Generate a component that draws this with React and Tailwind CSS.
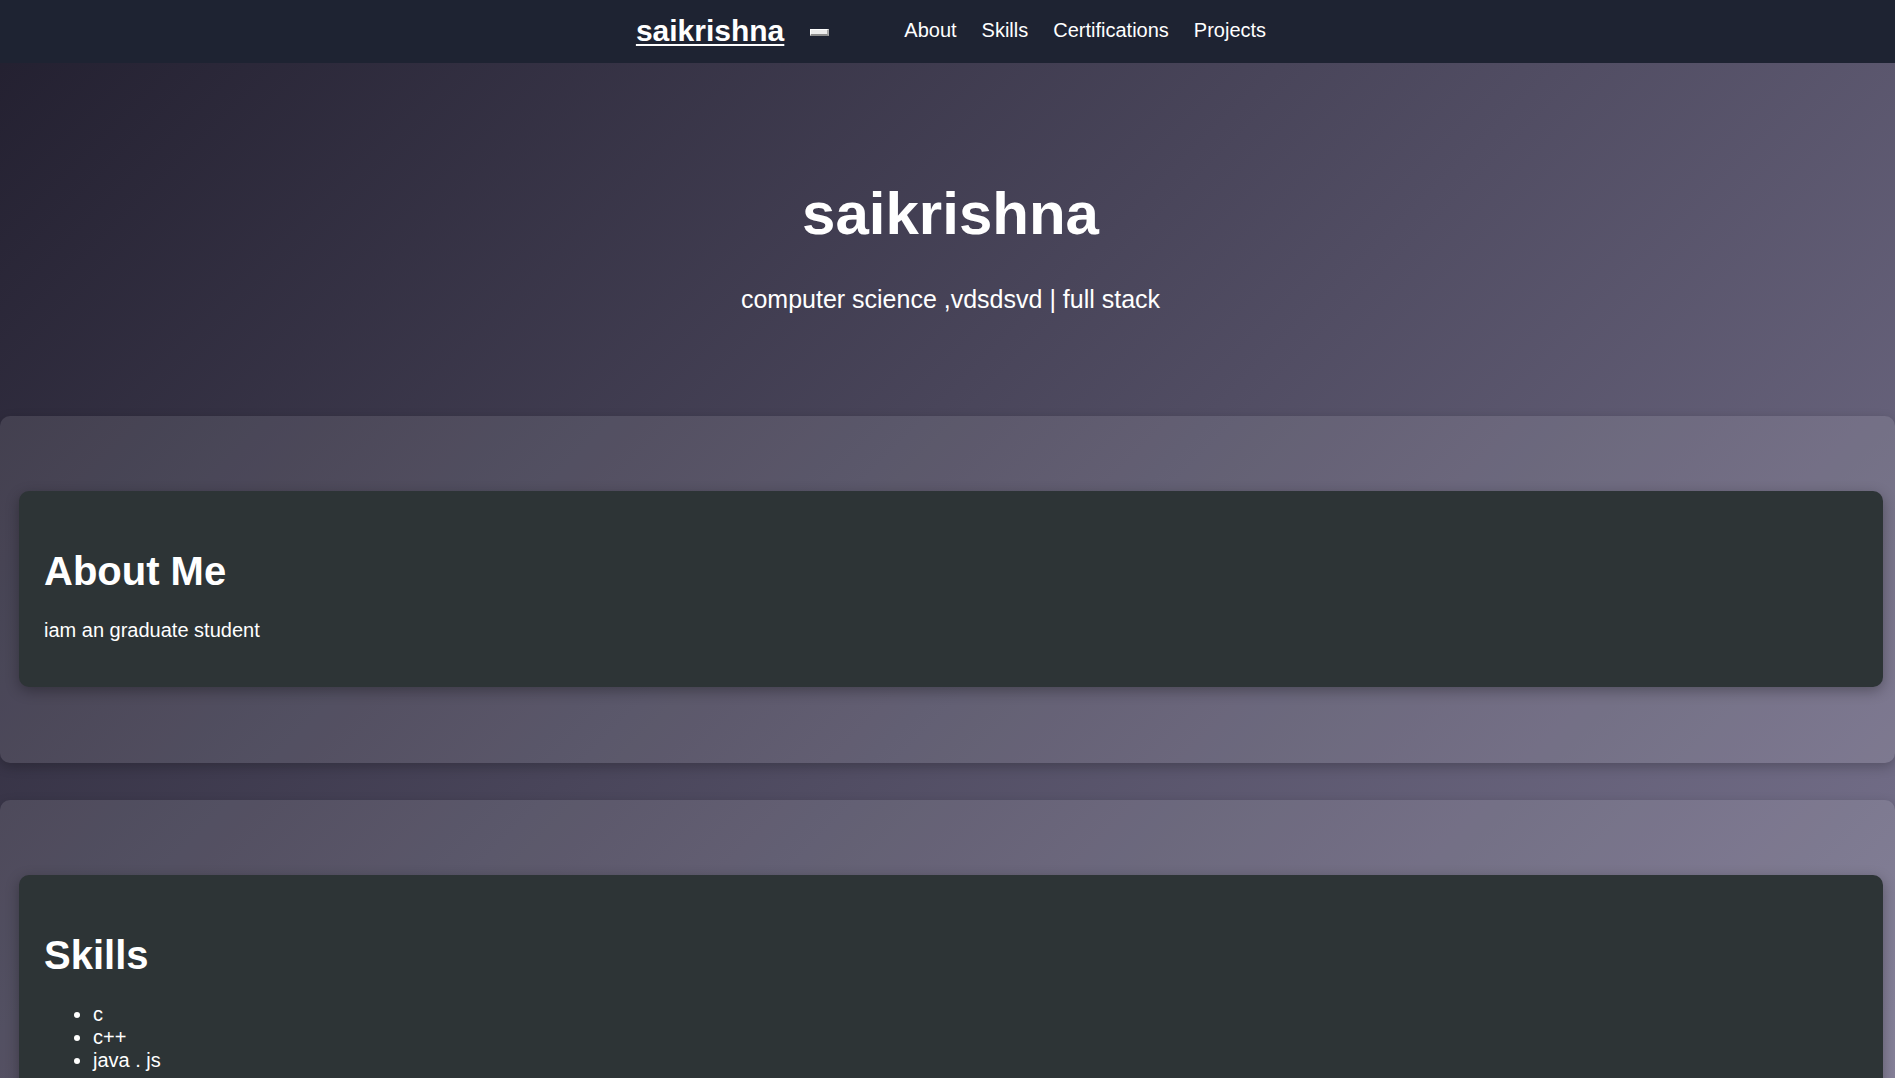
export default function App() {
  const links = ["About", "Skills", "Certifications", "Projects"];
  return (
    <div className="h-[1078px] overflow-hidden font-['Liberation_Sans',Arial,sans-serif] text-white bg-[linear-gradient(135deg,#221f2f,#78738e)]">
      <nav className="h-[63px] bg-[#1e2332] flex items-center justify-center pb-[2px] pl-[7px]">
        <a href="#" className="text-[30px] leading-[34px] font-bold underline decoration-2 underline-offset-[3px] text-white">
          saikrishna
        </a>
        <div className="ml-[26px] mt-1 w-[19px] h-[7px] bg-[#ececec] border-t border-l border-white border-b-2 border-r-2 border-b-[#8c8c8c] border-r-[#a8a8a8]" />
        <ul className="ml-[75px] flex gap-[25px] text-[20px] leading-[23px]">
          {links.map((l) => (
            <li key={l}>
              <a href="#" className="text-white">{l}</a>
            </li>
          ))}
        </ul>
      </nav>

      <header className="pt-[117px] pb-[102px] pl-[6px] text-center">
        <h1 className="text-[60px] leading-[68px] font-bold">saikrishna</h1>
        <p className="mt-[37px] text-[25px] leading-[29px]">computer science ,vdsdsvd | full stack</p>
      </header>

      <main className="flex flex-col gap-[37px]">
        <section className="rounded-[10px] bg-white/10 shadow-[0_4px_12px_rgba(0,0,0,0.22)] pt-[75px] pb-[76px] pl-[19px] pr-[12px]">
          <div className="rounded-[10px] bg-[#2d3436] shadow-[0_4px_14px_rgba(0,0,0,0.3)] pt-[57px] pb-[45px] px-[25px]">
            <h2 className="text-[40px] leading-[46px] font-bold">About Me</h2>
            <p className="mt-[25px] text-[20px] leading-[23px]">iam an graduate student</p>
          </div>
        </section>

        <section className="rounded-[10px] bg-white/10 shadow-[0_4px_12px_rgba(0,0,0,0.22)] pt-[75px] pb-[76px] pl-[19px] pr-[12px]">
          <div className="rounded-[10px] bg-[#2d3436] shadow-[0_4px_14px_rgba(0,0,0,0.3)] pt-[57px] pb-[45px] px-[25px]">
            <h2 className="text-[40px] leading-[46px] font-bold">Skills</h2>
            <ul className="mt-[25px] list-disc pl-[49px] text-[20px] leading-[23px]">
              <li>c</li>
              <li>c++</li>
              <li>java . js</li>
            </ul>
          </div>
        </section>

        <section className="rounded-[10px] bg-white/10 shadow-[0_4px_12px_rgba(0,0,0,0.22)] pt-[75px] pb-[76px] pl-[19px] pr-[12px]">
          <div className="rounded-[10px] bg-[#2d3436] shadow-[0_4px_14px_rgba(0,0,0,0.3)] pt-[57px] pb-[45px] px-[25px]">
            <h2 className="text-[40px] leading-[46px] font-bold">Certifications</h2>
          </div>
        </section>
      </main>
    </div>
  );
}
